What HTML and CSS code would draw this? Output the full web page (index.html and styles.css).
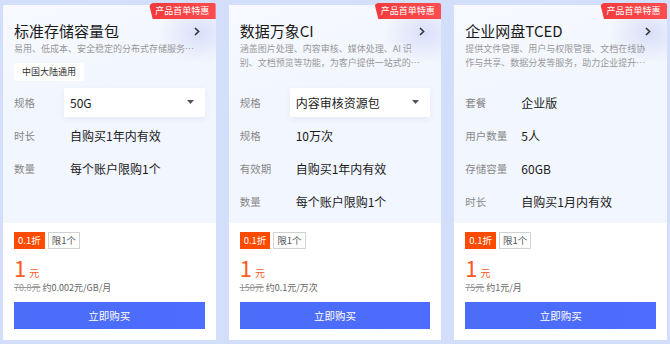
FILE: index.html
```html
<!DOCTYPE html>
<html lang="zh-CN">
<head>
    <meta charset="UTF-8">
    <meta name="viewport" content="width=device-width, initial-scale=1.0">
    <title>产品首单特惠</title>
    <link rel="stylesheet" href="styles.css">
</head>
<body>

<div class="cards">

    <div class="card">
        <span class="badge">产品首单特惠</span>
        <div class="card-top">
            <div class="head">
                <div class="title-row">
                    <h3>标准存储容量包</h3>
                    <svg class="chevron" width="6" height="9" viewBox="0 0 6 9"><path d="M1 1l3.6 3.5L1 8" fill="none" stroke="#333" stroke-width="1.6"/></svg>
                </div>
                <p class="desc">易用、低成本、安全稳定的分布式存储服务…</p>
                <span class="region">中国大陆通用</span>
            </div>
            <div class="spec">
                <div class="row">
                    <span class="label">规格</span>
                    <div class="select">50G<svg width="7" height="4" viewBox="0 0 7 4"><path d="M0 0h7L3.5 4z" fill="#555"/></svg></div>
                </div>
                <div class="row"><span class="label">时长</span><span class="value">自购买1年内有效</span></div>
                <div class="row"><span class="label">数量</span><span class="value">每个账户限购1个</span></div>
            </div>
        </div>
        <div class="card-bottom">
            <div class="tags"><span class="off">0.1折</span><span class="limit">限1个</span></div>
            <div class="price"><b>1</b><span>元</span></div>
            <div class="origin"><s>70.8元</s> 约0.002元/GB/月</div>
            <button class="buy">立即购买</button>
        </div>
    </div>

    <div class="card">
        <span class="badge">产品首单特惠</span>
        <div class="card-top">
            <div class="head">
                <div class="title-row">
                    <h3>数据万象CI</h3>
                    <svg class="chevron" width="6" height="9" viewBox="0 0 6 9"><path d="M1 1l3.6 3.5L1 8" fill="none" stroke="#333" stroke-width="1.6"/></svg>
                </div>
                <p class="desc">涵盖图片处理、内容审核、媒体处理、AI 识</p>
                <p class="desc">别、文档预览等功能，为客户提供一站式的…</p>
            </div>
            <div class="spec">
                <div class="row">
                    <span class="label">规格</span>
                    <div class="select">内容审核资源包<svg width="7" height="4" viewBox="0 0 7 4"><path d="M0 0h7L3.5 4z" fill="#555"/></svg></div>
                </div>
                <div class="row"><span class="label">规格</span><span class="value">10万次</span></div>
                <div class="row"><span class="label">有效期</span><span class="value">自购买1年内有效</span></div>
                <div class="row"><span class="label">数量</span><span class="value">每个账户限购1个</span></div>
            </div>
        </div>
        <div class="card-bottom">
            <div class="tags"><span class="off">0.1折</span><span class="limit">限1个</span></div>
            <div class="price"><b>1</b><span>元</span></div>
            <div class="origin"><s>150元</s> 约0.1元/万次</div>
            <button class="buy">立即购买</button>
        </div>
    </div>

    <div class="card">
        <span class="badge">产品首单特惠</span>
        <div class="card-top">
            <div class="head">
                <div class="title-row">
                    <h3>企业网盘TCED</h3>
                    <svg class="chevron" width="6" height="9" viewBox="0 0 6 9"><path d="M1 1l3.6 3.5L1 8" fill="none" stroke="#333" stroke-width="1.6"/></svg>
                </div>
                <p class="desc">提供文件管理、用户与权限管理、文档在线协</p>
                <p class="desc">作与共享、数据分发等服务，助力企业提升…</p>
            </div>
            <div class="spec">
                <div class="row"><span class="label">套餐</span><span class="value">企业版</span></div>
                <div class="row"><span class="label">用户数量</span><span class="value">5人</span></div>
                <div class="row"><span class="label">存储容量</span><span class="value">60GB</span></div>
                <div class="row"><span class="label">时长</span><span class="value">自购买1月内有效</span></div>
            </div>
        </div>
        <div class="card-bottom">
            <div class="tags"><span class="off">0.1折</span><span class="limit">限1个</span></div>
            <div class="price"><b>1</b><span>元</span></div>
            <div class="origin"><s>75元</s> 约1元/月</div>
            <button class="buy">立即购买</button>
        </div>
    </div>

</div>

</body>
</html>
```

FILE: styles.css
```css
* {
    margin: 0;
    padding: 0;
    box-sizing: border-box;
}

html, body {
    height: 100%;
    font-family: "Noto Sans CJK SC", "Liberation Sans", sans-serif;
    background: #d3defa;
    color: #222;
    overflow: hidden;
}

.cards {
    display: grid;
    grid-template-columns: repeat(3, 1fr);
    gap: 13px;
    padding: 5px 3px 0;
}

.card {
    position: relative;
    height: 335px;
    background: #fff;
    display: flex;
    flex-direction: column;
}

.badge {
    position: absolute;
    top: -2px;
    right: 0;
    width: 67px;
    height: 16px;
    line-height: 16px;
    font-size: 9px;
    text-align: center;
    color: #fff;
    background: linear-gradient(90deg, #f23a3c, #ff4d4f);
    border-radius: 5px 2px 0 0;
    clip-path: polygon(0 0, 100% 0, 100% 100%, 4px 100%);
    z-index: 2;
}

.card-top {
    height: 218px;
    background:
        radial-gradient(ellipse 40px 30px at 92% 28px, rgba(206, 214, 248, 0.7), rgba(206, 214, 248, 0)),
        linear-gradient(160deg, #f7f9ff 0%, #f2f6fe 40%, #f2f6ff 100%);
}

.head {
    height: 80px;
    padding: 15px 11px 0;
}

.title-row {
    display: flex;
    justify-content: space-between;
    align-items: center;
    height: 22px;
    padding-right: 5px;
}

.title-row h3 {
    font-size: 15px;
    font-weight: 400;
    line-height: 22px;
    color: #1a1a1a;
}

.desc {
    font-size: 9px;
    line-height: 14px;
    color: #999;
    white-space: nowrap;
}

.region {
    display: inline-block;
    margin-top: 5px;
    height: 18px;
    line-height: 18px;
    padding: 0 8px;
    font-size: 9px;
    color: #333;
    background: #fff;
    border-radius: 2px;
}

.spec {
    padding: 0.5px 11px 0;
}

.row {
    display: flex;
    align-items: center;
    height: 33px;
}

.label {
    width: 50px;
    flex-shrink: 0;
    font-size: 10.5px;
    color: #888;
}

.value {
    padding-left: 6px;
    font-size: 12px;
    color: #1a1a1a;
}

.select {
    flex: 1;
    height: 29px;
    display: flex;
    justify-content: space-between;
    align-items: center;
    padding: 0 11px 0 6px;
    font-size: 12px;
    color: #1a1a1a;
    background: #fff;
    box-shadow: 0 2px 6px rgba(40, 70, 160, 0.07);
}

.card-bottom {
    flex: 1;
    padding: 9px 11px 11px;
    display: flex;
    flex-direction: column;
}

.tags {
    display: flex;
    gap: 3px;
    height: 17px;
}

.tags span {
    height: 17px;
    line-height: 15px;
    padding: 0 3px;
    font-size: 9.5px;
    border: 1px solid transparent;
}

.tags .off {
    background: #ff4b00;
    color: #fff;
}

.tags .limit {
    border-color: #d2d2d2;
    color: #555;
}

.price {
    margin-top: 6px;
    height: 24px;
    line-height: 24px;
    color: #ff5a1f;
}

.price b {
    font-size: 22px;
    font-weight: 400;
}

.price span {
    margin-left: 3px;
    font-size: 10px;
}

.origin {
    margin-top: 2px;
    height: 14px;
    line-height: 14px;
    font-size: 9px;
    color: #666;
}

.origin s {
    color: #999;
}

.buy {
    margin-top: 7px;
    height: 27px;
    border: none;
    font-family: inherit;
    font-size: 10.5px;
    color: #fff;
    background: linear-gradient(90deg, #4a6cf7, #4e6cff);
    cursor: pointer;
}

.buy:hover {
    background: #3d5ee8;
}
```
